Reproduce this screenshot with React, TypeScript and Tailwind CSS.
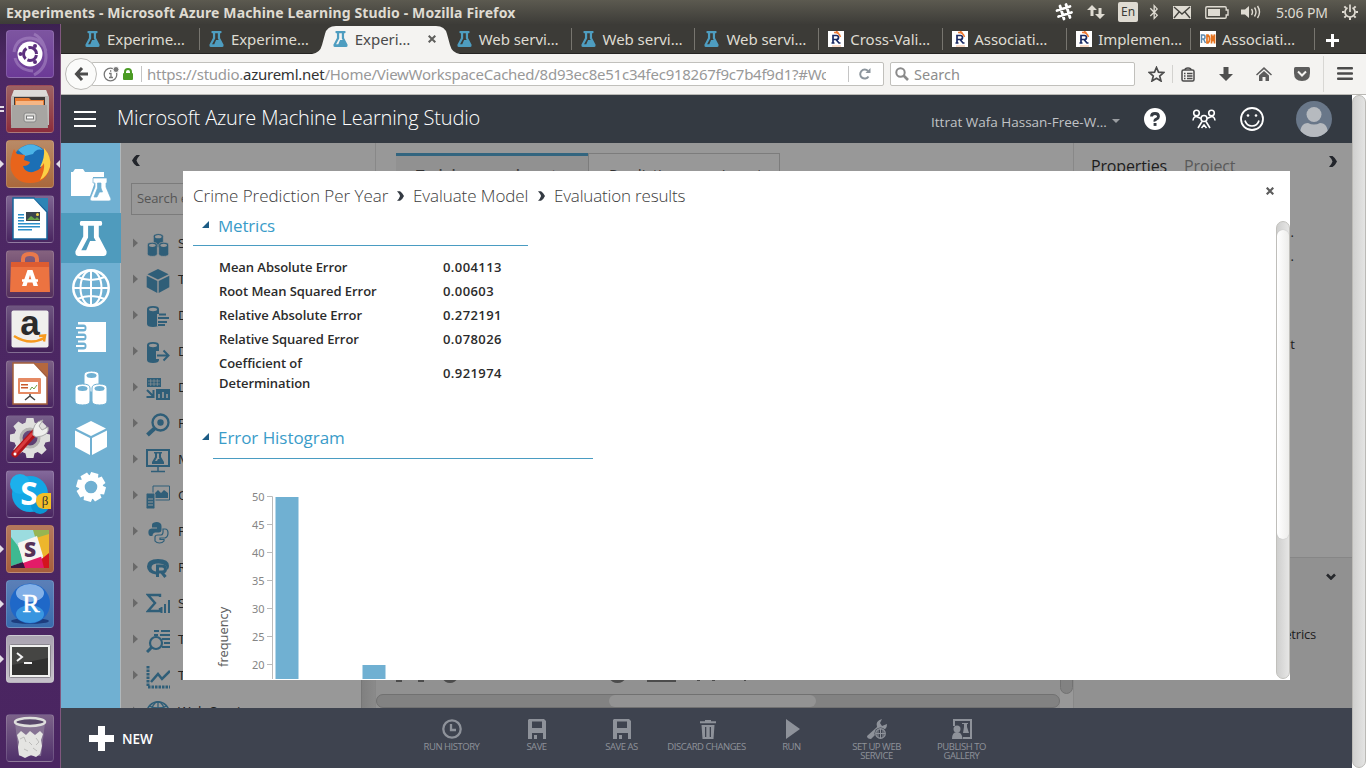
import React from "react";
import { FaBluetoothB } from "react-icons/fa";

type P = { className?: string };

const Flask = ({ className = "" }: P) => (
  <svg viewBox="0 0 32 36" className={className} fill="currentColor" fillRule="evenodd">
    <path d="M6 0h20q1.500 0 1.500 2.500T26 5h-2v11l8 15q.5 5-3 5H3q-3.500 0-3-5l8-15V5H6Q4.500 5 4.500 2.500T6 0zM13 5v12L6 30h5l4-9.500h6L19 17V5z" />
  </svg>
);

const Cylinders = ({ className = "", hole }: P & { hole: string }) => (
  <svg viewBox="0 0 34 36" className={className} fill="currentColor">
    {[[10, 1], [1, 14], [18, 14]].map(([x, y]) => (
      <g key={`${x}-${y}`}>
        <path d={`M${x} ${y + 4}q0-4 7.500-4t7.500 4v13q0 4-7.500 4t-7.500-4z`} stroke={hole} strokeWidth="1" />
        <ellipse cx={x + 7.5} cy={y + 4.5} rx="5" ry="2.500" fill={hole} />
      </g>
    ))}
  </svg>
);

const Cube = ({ className = "" }: P) => (
  <svg viewBox="0 0 32 34" className={className} fill="currentColor">
    <path d="M16 0l15 7.500L16 15 1 7.500zM0 9.500l15 7.500v17L0 26zM32 9.500L17 17v17l15-8z" />
  </svg>
);

const Globe = ({ className = "" }: P) => (
  <svg viewBox="0 0 38 38" className={className} fill="none" stroke="currentColor" strokeWidth="2">
    <circle cx="19" cy="19" r="17.700" strokeWidth="2.500" />
    <ellipse cx="19" cy="19" rx="10.500" ry="17.500" />
    <path d="M19 1v36M1 19h36M5.500 8q13.500 6 27 0M5.500 30q13.500-6 27 0" />
  </svg>
);

const Gear = ({ className = "" }: P) => (
  <svg viewBox="-16 -16 32 32" className={className} fill="currentColor">
    {[0, 45, 90, 135, 180, 225, 270, 315].map((a) => (
      <path key={a} d="M-5-9l1-6.500h8l1 6.500z" transform={`rotate(${a + 15})`} />
    ))}
    <circle r="9.700" fill="none" stroke="currentColor" strokeWidth="6" />
  </svg>
);

const Chevron = ({ className = "" }: P) => (
  <svg viewBox="0 0 8 11" className={className} fill="currentColor">
    <path d="M0 0h3.500q3 2 4.500 5.500Q6.500 9 3.500 11H0q2.500-2.500 3.500-5.500Q2.500 2.500 0 0z" />
  </svg>
);

/* ---------- launcher ---------- */

const launcher: { name: string; tile: string; left?: boolean; right?: boolean; art: React.ReactNode }[] = [
  {
    name: "dash", tile: "bg-linear-to-b from-[#7d55a0] to-[#6c3a97]",
    art: (
      <>
        <g fill="none" stroke="#b79bd0" strokeOpacity=".45" strokeWidth="3">
          <path d="M8 22Q10 8 24 8q12 1 16 13M40 24Q41 38 28 45M9 28q3 12 18 13M28 4q12 6 12 24" />
        </g>
        <circle cx="24" cy="24" r="12.500" fill="#fff" />
        <circle cx="24" cy="24" r="6.500" fill="none" stroke="#5b2f7d" strokeWidth="3" strokeDasharray="11.600 2" strokeDashoffset="-1" />
        <g fill="#5b2f7d"><circle cx="14.500" cy="24" r="2" /><circle cx="29" cy="16" r="2" /><circle cx="29" cy="32" r="2" /></g>
      </>
    ),
  },
  {
    name: "files", tile: "bg-linear-to-b from-[#9d6263] to-[#8c2c3c]", left: true,
    art: (
      <>
        <path d="M8 5h32l3 7v28H5V12z" fill="#bdbbb8" /><path d="M8 5h32l2 6H6z" fill="#dddbd8" />
        <path d="M8 12h31v10H8z" fill="#3f3a38" /><path d="M9 13h14l2 2h13v6H9z" fill="#e87c33" /><path d="M10 16h27v4H10z" fill="#f6b685" />
        <path d="M6 20h35l1 23H5z" fill="#a7a5a2" /><rect x="18" y="28" width="12" height="9" rx="2" fill="#d9d8d5" stroke="#888" /><rect x="20.500" y="31" width="7" height="3" fill="#fff" stroke="#777" />
      </>
    ),
  },
  {
    name: "firefox", tile: "bg-linear-to-b from-[#b98a66] to-[#a9683c]", left: true, right: true,
    art: (
      <>
        <circle cx="25" cy="23" r="18.500" fill="#1c6fb5" /><path d="M12 10Q25-1 37 10 30 8 27 14l-8 2z" fill="#4bb3e6" />
        <path d="M38 8q8 9 6 19Q41 43 24 43q-14 0-19-13Q3 20 8 9l3 5 8 1-1 5 6 2q-1 4-7 4 2 7 10 6 10-2 11-13 1-5 0-11z" fill="#e8641b" />
        <path d="M38 8q8 9 6 19-3 10-10 13 5-10 4-17-2 4-4 4 5-9 4-19z" fill="#fbd045" />
      </>
    ),
  },
  {
    name: "writer", tile: "bg-linear-to-b from-[#7f6592] to-[#492560]",
    art: (
      <>
        <path d="M7 3h21l13 14v27H7z" fill="#fff" stroke="#14659c" strokeWidth="1.500" /><path d="M28 3h14v14z" fill="#2d84b5" />
        <path d="M12 19h6v1.500h-6zm0 3h6v1.500h-6zm0 3h6v1.500h-6zm0 3h22v1.500H12zm0 3h22v1.500H12zm0 3h14v1.500H12z" fill="#2b8fc9" />
        <path d="M20 17h14v9H20z" fill="#3b444c" /><path d="M21 25l4-4 4 3 2-2 3 3z" fill="#69a747" /><circle cx="31.500" cy="19.500" r="1.500" fill="#f3d34a" />
      </>
    ),
  },
  {
    name: "software", tile: "bg-linear-to-b from-[#85627f] to-[#54305c]",
    art: (
      <>
        <path d="M17 15V9q0-5 7-5t7 5v6" fill="none" stroke="#e9794b" strokeWidth="4" />
        <path d="M5 12h38l1 30H4z" fill="#ec7341" /><path d="M5 12h38v5H5z" fill="#dc5c31" />
        <path d="M16 36l5.500-16h5L32 36h-4.500l-1-3.500h-5l-1 3.500zM24 25l-1.500 5h3z" fill="#fff" fillRule="evenodd" /><path d="M16 30.500h16" stroke="#fff" strokeWidth="2.500" />
      </>
    ),
  },
  {
    name: "amazon", tile: "bg-linear-to-b from-[#6e5580] to-[#432158]",
    art: (
      <>
        <rect x="5.500" y="5.500" width="37" height="37" rx="2" fill="#f0efed" />
        <text x="24" y="30" textAnchor="middle" fontSize="35" fontWeight="700" fontFamily="Liberation Sans, sans-serif" fill="#2b2b2b">a</text>
        <path d="M8 31q16 10 30 2M33 31l6-.5-1 6" fill="none" stroke="#f79a1e" strokeWidth="2.500" />
      </>
    ),
  },
  {
    name: "impress", tile: "bg-linear-to-b from-[#7b6085] to-[#492560]",
    art: (
      <>
        <path d="M7 3h21l13 14v27H7z" fill="#fff" stroke="#a5603b" strokeWidth="1.500" /><path d="M28 3h14v14z" fill="#b4683e" />
        <rect x="12" y="18" width="23" height="16" rx="1" fill="#e58a64" /><path d="M14 22h18v10H14z" fill="#fff" />
        <path d="M15 24h7v1.500h-7zm0 3h7v1.500h-7z" fill="#c95a2c" /><path d="M24 30l2-3 2 2 3-4" fill="none" stroke="#70a648" /><path d="M24 34v3m-5 3l5-4 5 4" fill="none" stroke="#444" strokeWidth="1.500" />
      </>
    ),
  },
  {
    name: "settings", tile: "bg-linear-to-b from-[#77608a] to-[#492560]",
    art: (
      <>
        <g transform="translate(24 23)" fill="#dfdfdd">
          {[0, 45, 90, 135, 180, 225, 270, 315].map((a) => <path key={a} d="M-5-13l1.500-7h7l1.500 7z" transform={`rotate(${a})`} />)}
          <circle r="13" fill="none" stroke="#dfdfdd" strokeWidth="6" /><circle r="9" fill="none" stroke="#b4b3b1" strokeWidth="3" />
        </g>
        <path d="M9 39L28 18" stroke="#b0141a" strokeWidth="7" strokeLinecap="round" /><path d="M9 38L26 19" stroke="#d93b3d" strokeWidth="3" strokeLinecap="round" />
        <path d="M27 20q-1-13 10-15l-4 6 3 4 6-3q2 9-12 10z" fill="#efefed" stroke="#aaa" /><circle cx="9" cy="39" r="1.500" fill="#fff" />
      </>
    ),
  },
  {
    name: "skype", tile: "bg-linear-to-b from-[#84699b] to-[#492560]",
    art: (
      <>
        <circle cx="24" cy="24" r="18" fill="#13a7e5" /><circle cx="14" cy="14" r="10" fill="#1cb0ec" /><circle cx="34" cy="35" r="9" fill="#0a96d3" />
        <text x="23" y="35" textAnchor="middle" fontSize="32" fontWeight="700" fontFamily="Open Sans, sans-serif" fill="#fff">S</text>
        <path d="M37 23h8v16h-7q-8-1-8-8t7-8z" fill="#f2bf26" /><text x="39" y="35" textAnchor="middle" fontSize="13" fontFamily="Liberation Serif, serif" fill="#333">β</text>
      </>
    ),
  },
  {
    name: "slack", tile: "bg-linear-to-b from-[#b4785d] to-[#a65e3c]", left: true,
    art: (
      <>
        <rect x="5" y="5" width="38" height="38" rx="2" fill="#f3f1ee" />
        <path d="M5 5h24l4 8-24 8-4-3z" fill="#9bdcdf" /><path d="M27 5h16v6l-13 4z" fill="#97b552" /><path d="M30 13l13-4v23l-5 3z" fill="#edb62c" />
        <path d="M5 12l7 9 6 16-13 4z" fill="#3eb991" /><path d="M38 32l5-4v15h-6l-3-8z" fill="#d3141d" /><path d="M16 37l19-6 3 12H18z" fill="#e31c68" /><path d="M5 41l12-4 2 6H5z" fill="#3a1842" />
        <path d="M12 18l19-7 6 20-20 7z" fill="#f6f4f1" />
        <text x="24" y="32" textAnchor="middle" fontSize="21" fontWeight="800" fontFamily="Open Sans, sans-serif" fill="#553157">S</text>
      </>
    ),
  },
  {
    name: "rstudio", tile: "bg-linear-to-b from-[#5b7fb7] to-[#386bad]", left: true,
    art: (
      <>
        <ellipse cx="24" cy="41" rx="19" ry="3" fill="#1d3d7e" /><circle cx="24" cy="23.500" r="20" fill="#1f68c8" /><ellipse cx="24" cy="34" rx="14" ry="9" fill="#45a9ea" fillOpacity=".7" />
        <ellipse cx="24" cy="13" rx="14" ry="9" fill="#a4c8f2" fillOpacity=".75" />
        <text x="25" y="32" textAnchor="middle" fontSize="26" fontFamily="Liberation Serif, serif" fill="#fff" stroke="#fff" strokeWidth=".6">R</text>
      </>
    ),
  },
  {
    name: "terminal", tile: "bg-linear-to-b from-[#aaa3b0] to-[#c5c1c9]", left: true,
    art: (
      <>
        <rect x="3.500" y="9.500" width="41" height="33" rx="1" fill="#f1f1ef" stroke="#8b878f" /><rect x="6" y="12" width="36" height="28" fill="#313130" /><path d="M6 12h36v11L6 30z" fill="#454543" />
        <path d="M11 18l5 4-5 4M18 28h8" fill="none" stroke="#f4f4f4" strokeWidth="2" />
      </>
    ),
  },
];

const Tile = ({ tile, art }: { tile: string; art: React.ReactNode }) => (
  <div className={`size-12 rounded-[4px] border border-white/15 ${tile}`}>
    <svg viewBox="1 1 46 46" className="size-full">{art}</svg>
  </div>
);

const Launcher = () => (
  <aside className="flex w-[61px] shrink-0 flex-col justify-between border-r border-[#80577f] bg-linear-to-b from-[#3c2151] via-[#4d2864] via-5% to-[#4a2561] pt-[6px] pb-[6px]">
    <div className="flex flex-col gap-[7px]">
      {launcher.map((l) => (
        <div key={l.name} className="flex h-12 items-center">
          <svg viewBox="0 0 6 12" className="h-3 w-[6px]" fill="#e3dde6">
            {l.left && (l.name === "files" ? <path d="M0 3h4v2H0zM0 7h4v2H0z" /> : <path d="M0 2l4 4-4 4z" />)}
          </svg>
          <Tile tile={l.tile} art={l.art} />
          <svg viewBox="0 0 6 12" className="h-3 w-[6px]" fill="#e3dde6">{l.right && <path d="M6 2L2 6l4 4z" />}</svg>
        </div>
      ))}
    </div>
    <div className="pl-[6px]">
      <Tile
        tile="bg-linear-to-b from-[#7c6389] to-[#50306a]"
        art={
          <>
            <path d="M9 9h30l-4 33H13z" fill="#8c7c98" fillOpacity=".8" />
            <path d="M11 21l4-4 5 4 4-4 5 4 5-4 3 3-2 6 1 6-2 8-4 3-5-2-6 3-6-3-1-8 1-5z" fill="#e4e4e2" />
            <path d="M14 25l4-2 2 5M30 24l3 4-3 3M18 35l4 2M27 34l4 3M23 28l3 3" fill="none" stroke="#bcbcba" />
            <ellipse cx="24" cy="8" rx="15" ry="4" fill="#57476a" stroke="#dededc" strokeWidth="2.500" />
          </>
        }
      />
    </div>
  </aside>
);

/* ---------- desktop bar ---------- */

const TopBar = () => (
  <header className="flex h-6 shrink-0 items-center bg-linear-to-b from-[#5c5a50] to-[#3d3c38] pl-[6px] text-[#dfdbd2]">
    <div className="w-[1048px] text-[14px] font-bold tracking-[0.130px] whitespace-nowrap">Experiments - Microsoft Azure Machine Learning Studio - Mozilla Firefox</div>
    <svg viewBox="0 0 20 20" className="h-5 w-5" stroke="#fff" strokeWidth="2.800" strokeLinecap="round"><path d="M6 4l4 13M12 2.500l4 13M3 8.500l13-4M4.500 14.500l13-4" /></svg>
    <svg viewBox="0 0 18 16" className="ml-[13px] h-4 w-[18px]" fill="currentColor"><path d="M5 1l5 5H6.500v6h-3V6H0zM13 15l-5-5h3.500V4h3v6H18z" /></svg>
    <div className="ml-[13px] flex h-5 w-5 items-center justify-center rounded-[2px] bg-[#dfdbd2] text-[12px] text-[#3c3b37]">En</div>
    <FaBluetoothB className="ml-[8px] h-4 w-4" />
    <svg viewBox="0 0 18 13" className="ml-[11px] h-[13px] w-[18px]"><rect width="18" height="13" fill="#dfdbd2" /><path d="M1 1l8 7 8-7M1 12l5-6m11 6l-5-6" fill="none" stroke="#45443f" strokeWidth="1.400" /></svg>
    <svg viewBox="0 0 24 13" className="ml-[14px] h-[13px] w-6"><path d="M2 .75h18q1.200 0 1.200 1.200V4H23v5h-1.800v2q0 1.200-1.200 1.200H2q-1.200 0-1.200-1.200V2Q.8.750 2 .750z" fill="none" stroke="#dfdbd2" strokeWidth="1.400" /><path d="M3 3h12v7H3z" fill="#dfdbd2" /></svg>
    <svg viewBox="0 0 20 16" className="ml-[12px] h-4 w-5" fill="currentColor"><path d="M0 5.500h4L8 2v12l-4-3.500H0z" /><g fill="none" stroke="currentColor" strokeWidth="1.400"><path d="M10.500 5q2 3 0 6M13.500 3.500q3 4.500 0 9M16.500 2q4 6 0 12" /></g></svg>
    <div className="ml-[15px] w-[55px] text-[14px] tracking-[-0.100px] whitespace-nowrap">5:06 PM</div>
    <svg viewBox="-8 -8 16 16" className="ml-[11px] h-4 w-4" fill="none" stroke="currentColor" strokeWidth="1.700"><path d="M-2.500-4.300A5 5 0 1 0 2.500-4.300M0-7.500v7.500" />{[45, 90, 135, 180, 225, 270, 315].map((a) => <path key={a} d="M0-5.500v-2.500" transform={`rotate(${a})`} strokeWidth="2" />)}</svg>
  </header>
);

/* ---------- browser ---------- */

const RIcon = () => (
  <svg viewBox="0 0 16 16" className="h-4 w-4"><path fill="#fff" d="M0 0h16v16H0z" /><path d="M3.500 12h3M5 12V4.500h3.500q2 0 2 2t-2 2H5M8 8.500l3 3.500h1.500" fill="none" stroke="#1b2a63" strokeWidth="1.700" /><path d="M6 1.500q5-.5 6.500 4.500M8 0l2.500 2" fill="none" stroke="#ee7a33" strokeWidth="1.500" /><path d="M4 15h9" stroke="#f3b48c" /></svg>
);
const RdmIcon = () => (
  <svg viewBox="0 0 16 16" className="h-4 w-4"><path fill="#fff" d="M0 0h16v16H0z" /><path d="M1.500 12V4h2q1.500 0 1.500 2T3.500 8H2m1.500 0L5.500 12" fill="none" stroke="#5f8aae" strokeWidth="1.500" /><path d="M7 4v8h1q1.500-1 1.500-4T8 4zM11.500 12.500v-9l1.500 5 1.500-5v9" fill="none" stroke="#e4731f" strokeWidth="1.700" /></svg>
);

const tabs: [string, "flask" | "r" | "rdm"][] = [
  ["Experime…", "flask"], ["Experime…", "flask"], ["Experi…", "flask"], ["Web servi…", "flask"], ["Web servi…", "flask"],
  ["Web servi…", "flask"], ["Cross-Vali…", "r"], ["Associati…", "r"], ["Implemen…", "r"], ["Associati…", "rdm"],
];

const TabStrip = () => (
  <div className="flex h-[30px] shrink-0 bg-[#3c3b37] pl-[15px] text-[15px] text-[#dfdbd2] shadow-[inset_0_-1px_0_#252422]">
    {tabs.map(([label, icon], i) => {
      const active = i === 2;
      return (
        <div key={i} className={`relative flex w-[123.900px] shrink-0 items-center ${active ? "text-[#4a4a4a]" : ""}`}>
          {active && (
            <svg viewBox="0 0 148 28" className="absolute top-[2px] left-[-12px] h-7 w-[148px]" fill="#f4f3f1">
              <path d="M0 28q8-1 10-9l3-11q2-8 11-8h100q9 0 11 8l3 11q2 8 10 9z" />
            </svg>
          )}
          <div className="relative flex flex-1 items-center pl-[9px]">
            {icon === "flask" && <Flask className="mr-[7px] h-4 w-[15px] text-[#4e9dc0]" />}
            {icon === "r" && <span className="mr-[6px]"><RIcon /></span>}
            {icon === "rdm" && <span className="mr-[6px]"><RdmIcon /></span>}
            <span className="tracking-[-0.050px] whitespace-nowrap">{label}</span>
            {active && <svg viewBox="0 0 8 8" className="ml-[18px] h-2 w-2" stroke="#5e5e5c" strokeWidth="2"><path d="M.7.7l6.600 6.600M7.300.700L.7 7.300" /></svg>}
          </div>
          {i !== 1 && !active && <i className="h-[22px] w-px bg-[#77756f]" />}
        </div>
      );
    })}
    <svg viewBox="0 0 13 13" className="mt-[10px] ml-[11px] h-[13px] w-[13px]" fill="#fff"><path d="M5 0h3v5h5v3H8v5H5V8H0V5h5z" /></svg>
  </div>
);

const Toolbar = () => (
  <div className="flex h-[41px] shrink-0 items-center border-b border-[#b9b8b4] bg-[#f4f3f1] pl-1">
    <div className="z-10 flex size-8 items-center justify-center rounded-full border border-[#bcbbb8] bg-[#fbfbfa]">
      <svg viewBox="0 0 14 14" className="h-[14px] w-[14px]" fill="none" stroke="#4c4c4c" strokeWidth="3"><path d="M8 1L2.500 7 8 13M3 7h11" /></svg>
    </div>
    <div className="-ml-[5px] flex h-6 w-[792px] items-center rounded-r-[2px] border border-[#c1c0bc] bg-white">
      <svg viewBox="0 0 17 16" className="ml-[10px] h-4 w-[17px]"><circle cx="7.500" cy="8.500" r="6.300" fill="none" stroke="#777" strokeWidth="1.300" /><path d="M6 7.500h2v4m-2 0h4M7 5h1.300" stroke="#777" strokeWidth="1.300" fill="none" /><circle cx="13" cy="3.500" r="3" fill="#777" stroke="#fff" /></svg>
      <svg viewBox="0 0 10 12" className="ml-[3px] h-3 w-[10px]"><path d="M2 6V4q0-3 3-3t3 3v2" fill="none" stroke="#4b9b24" strokeWidth="2" /><rect y="5" width="10" height="7" rx="1" fill="#4b9b24" /></svg>
      <i className="ml-[8px] h-4 w-px bg-[#c5c5c5]" />
      <div className="ml-[5px] w-[679px] overflow-hidden text-[15px] tracking-[-0.250px] whitespace-nowrap text-[#999]">
        https://studio.<span className="text-[#333]">azureml.net</span>/Home/ViewWorkspaceCached/8d93ec8e51c34fec918267f9c7b4f9d1?#Wo
      </div>
      <i className="ml-auto h-4 w-px bg-[#c5c5c5]" />
      <svg viewBox="0 0 12 12" className="mr-[12px] ml-[10px] h-3 w-3" fill="none" stroke="#8c959d" strokeWidth="2"><path d="M9.500 8.500A4.500 4.500 0 1 1 9 3" /><path d="M11.500 0v5h-5z" fill="#8c959d" stroke="none" /></svg>
    </div>
    <div className="ml-[6px] flex h-6 w-[245px] items-center rounded-[2px] border border-[#c1c0bc] bg-white pl-1 text-[14.500px] text-[#8d8d8d]">
      <svg viewBox="0 0 14 14" className="mr-[5px] h-[14px] w-[14px]" fill="none" stroke="#8a8a8a" strokeWidth="2"><circle cx="5.500" cy="5.500" r="4.200" /><path d="M8.500 8.500L13 13" strokeWidth="2.600" /></svg>
      <span className="pt-[2px]">Search</span>
    </div>
    <svg viewBox="0 0 17 16" className="ml-[13px] h-4 w-[17px]" fill="none" stroke="#4b4b4b" strokeWidth="1.700"><path d="M8.500 1.500l2 4.700 5.200.4-4 3.400 1.300 5-4.500-2.700L4 15l1.300-5-4-3.400 5.200-.4z" /></svg>
    <i className="ml-[7px] h-[18px] w-px bg-[#d3d2cf]" />
    <svg viewBox="0 0 14 15" className="ml-[8px] h-[15px] w-[14px]" fill="none" stroke="#4b4b4b" strokeWidth="1.500"><rect x="1" y="3" width="12" height="11" rx="1.500" /><path d="M4 3q0-2 3-2t3 2M3 6.500h1.500M6 6.500h5.500M3 9h1.500M6 9h5.500M3 11.500h1.500M6 11.500h5.500" /></svg>
    <svg viewBox="0 0 14 14" className="ml-[24px] h-[14px] w-[14px]" fill="#4f4f4f"><path d="M4.500 0h5v7H14l-7 7-7-7h4.500z" /></svg>
    <svg viewBox="0 0 16 15" className="ml-[23px] h-[15px] w-4" fill="#5c5c5c"><path d="M0 7.500L8 0l8 7.500-1 1-7-6.300L1 8.500z" /><path d="M3 8.500l5-4.500 5 4.500V14H9.500v-4h-3v4H3z" /></svg>
    <svg viewBox="0 0 16 14" className="ml-[22px] h-[14px] w-4"><path d="M1.500 0h13Q16 0 16 1.500V6q0 8-8 8T0 6V1.500Q0 0 1.500 0z" fill="#5c5c5c" /><path d="M4 4.500l4 4 4-4" fill="none" stroke="#f4f3f1" strokeWidth="2" /></svg>
    <i className="ml-[13px] h-9 w-px bg-[#d8d7d4]" />
    <svg viewBox="0 0 16 14" className="ml-[13px] h-[14px] w-4" fill="#4b4b4b"><rect y="0" width="16" height="2.600" rx="1" /><rect y="5.200" width="16" height="2.600" rx="1" /><rect y="10.400" width="16" height="2.600" rx="1" /></svg>
  </div>
);

/* ---------- studio ---------- */

const StudioHeader = () => (
  <div className="flex h-12 shrink-0 items-center bg-[#343a42] pl-[13px] text-white">
    <div className="flex flex-col gap-[5px]">{[0, 1, 2].map((i) => <i key={i} className="h-[2px] w-[22px] bg-white" />)}</div>
    <div className="ml-[21px] w-[814px] pb-[2px] text-[20px] font-light tracking-[-0.160px] whitespace-nowrap">Microsoft Azure Machine Learning Studio</div>
    <div className="w-[176px] pt-[6px] text-[13.500px] whitespace-nowrap text-[#c1c3c6]">Ittrat Wafa Hassan-Free-W...</div>
    <svg viewBox="0 0 8 4" className="mt-[3px] ml-[5px] h-1 w-2 shrink-0" fill="#9a9da1"><path d="M0 0h8L4 4z" /></svg>
    <svg viewBox="0 0 22 22" className="ml-[24px] h-[22px] w-[22px] shrink-0"><circle cx="11" cy="11" r="11" fill="#fff" /><path d="M7.500 8.500Q7.500 5.500 11 5.500t3.500 2.900Q14.500 10 12.500 11t-1.500 2.500" fill="none" stroke="#343a42" strokeWidth="2.800" /><rect x="9.600" y="15" width="2.900" height="2.900" fill="#343a42" /></svg>
    <svg viewBox="0 0 24 20" className="ml-[26px] h-5 w-6 shrink-0" fill="none" stroke="#fff" strokeWidth="1.600"><circle cx="4.500" cy="4" r="2.800" /><circle cx="19.500" cy="4" r="2.800" /><circle cx="12" cy="9.500" r="3" /><path d="M1 11.500Q1.500 7.500 4.500 7.500L9 9.500M23 11.500Q22.500 7.500 19.500 7.500L15 9.500M6 19l4-6.500M18 19l-4-6.500M9.500 19l2.500-3 2.500 3" /></svg>
    <svg viewBox="0 0 24 24" className="ml-[24px] h-6 w-6 shrink-0"><circle cx="12" cy="12" r="11" fill="none" stroke="#fff" strokeWidth="1.800" /><circle cx="8" cy="8.500" r="1.300" fill="#fff" /><circle cx="16" cy="8.500" r="1.300" fill="#fff" /><path d="M5 13.500q1.500 5.500 7 5.500t7-5.500" fill="none" stroke="#fff" strokeWidth="1.700" /></svg>
    <svg viewBox="0 0 36 36" className="ml-[32px] h-9 w-9 shrink-0"><clipPath id="av"><circle cx="18" cy="18" r="18" /></clipPath><g clipPath="url(#av)"><path fill="#697789" d="M0 0h36v36H0z" /><circle cx="18" cy="13.500" r="7.500" fill="#b6babf" /><path d="M4 34q0-12 8-12 6 3 12 0 8 0 8 12-6 5-14 5T4 34z" fill="#b6babf" /></g></svg>
  </div>
);

const Rail = () => (
  <nav className="flex w-[60px] shrink-0 flex-col items-center border-r border-[#b0b8bc] bg-[#70b0d2] pt-[26px] text-white">
    <svg viewBox="0 0 40 32" className="h-8 w-10" fill="currentColor"><path d="M0 3h2l2-3h8l2 3h19v5H22v5h2l-5 14H0z" /><path d="M22 9h14v5h-1v4l5 12q0 2-2 2H21q-2 0-2-2l5-12v-4h-2zM26.500 14v5L23 28h3l2.500-5h3L30 19v-5z" fillRule="evenodd" stroke="#70b0d2" strokeWidth=".7" /></svg>
    <div className="mt-[12px] flex h-[50px] w-[60px] items-center justify-center bg-[#4f9bbd]"><Flask className="h-[35px] w-8" /></div>
    <Globe className="mt-[6px] h-[38px] w-[38px]" />
    <svg viewBox="0 0 30 30" className="mt-[15px] h-[30px] w-[30px]" fill="currentColor">
      <path d="M2 0h28v30H2z" />
      <g fill="#70b0d2"><path d="M0 2.500h7.500q3 0 3 3.500t-3 3.500H0zM0 11.500h7.500q3 0 3 3.500t-3 3.500H0zM0 20.500h7.500q3 0 3 3.500t-3 3.500H0z" /></g>
      <g fill="none" stroke="#fff" strokeWidth="2"><path d="M0 6h8.500M0 15h8.500M0 24h8.500" /></g>
    </svg>
    <Cylinders className="mt-[18px] h-[36px] w-[34px]" hole="#70b0d2" />
    <Cube className="mt-[15px] h-[34px] w-8" />
    <Gear className="mt-[17px] h-[30px] w-[30px]" />
  </nav>
);

const Cyl = () => <><path d="M1 4q0-3 6-3t6 3v15q0 3-6 3t-6-3z" /><ellipse cx="7" cy="4.500" rx="4" ry="1.700" fill="#989898" /></>;

const paletteIcons: React.ReactNode[] = [
  <Cylinders className="size-6" hole="#989898" />,
  <Cube className="size-6" />,
  <><Cyl /><path d="M11 9h10v12H11z" fill="#989898" /><path d="M13 9.500h7M12 13h11M12 17h9M12 20h7" stroke="currentColor" strokeWidth="1.800" /></>,
  <><Cyl /><path d="M10 10h5v8h-5z" fill="#989898" /><path d="M11 14.500h11M17.500 9.500l5 5-5 5" fill="none" stroke="currentColor" strokeWidth="2" /></>,
  <><path d="M1 1h14v9H1z" /><path d="M2 4h12M2 7h12M4.700 2v7M8 2v7M11.300 2v7" stroke="#989898" strokeWidth=".6" /><path d="M1 13l6 6M7.500 13v7h-7" fill="none" stroke="currentColor" strokeWidth="2" /><path d="M10 12h14v11H10z" /><path d="M13 21v-4M17 21v-6M21 21v-4" stroke="#989898" strokeWidth="1.600" /></>,
  <><circle cx="14.500" cy="9.500" r="8" fill="none" stroke="currentColor" strokeWidth="2.300" /><circle cx="14.500" cy="9.500" r="3.200" /><path d="M8.500 15.500L1.500 22" stroke="currentColor" strokeWidth="4" /></>,
  <><path d="M1 1h22v16H1z" fill="none" stroke="currentColor" strokeWidth="2" /><path fillRule="evenodd" d="M8 3h8v1.500h-1V8l3 5v2H6v-2l3-5V4.500H8zM11 4.500v4L9 12h2l1-2h1.500l-.5-1.500v-4z" /><path d="M12 17v5M5 22.500h14" stroke="currentColor" strokeWidth="1.500" /></>,
  <><path d="M7 1h16.500v14H7z" fill="none" stroke="currentColor" /><path d="M9 13V8l3-3 3 3 3-3 4 3v5z" /><rect y="8" width="9" height="16" rx="1.500" stroke="#989898" /><path d="M2 14h5M2 17h5M2 20h5" stroke="#989898" /></>,
  <><path d="M7 2q4-2 7 0 1.500 1 1.500 3v4q0 2-2.500 2.500H9Q6.500 12 6.500 15H4q-2-1-1.500-5 .5-2.500 3.500-2.500h5v-1H6V4q0-1.500 1-2z" /><path d="M17 8h2q3 0 3 4t-3 5h-5v1.500h4V20q-1.500 2-4.500 2T9 20v-4q0-2 3-2h3q2.500 0 2-6z" fill="none" stroke="currentColor" strokeWidth="1.200" /></>,
  <><path d="M1 9.500Q1 2 12 2t11 7q0 2-1.500 4-.5-6.500-9-6.500-7 0-7 4 0 3 4.500 4v3Q1 16 1 9.500z" /><path d="M11.500 20V9h4.500q3.500 0 3.500 3t-3.500 3h-4M15.500 15l4 5" fill="none" stroke="currentColor" strokeWidth="3" /></>,
  <><path d="M14 4V2H2l7 8-7 8h12v-3" fill="none" stroke="currentColor" strokeWidth="2.400" /><path d="M15.500 20v-6M19 20V11M23 20V7" stroke="currentColor" strokeWidth="2" /></>,
  <><path d="M8 2h5m2 0h9M8 6h4m2 0h10M16 10h8M18 14h6M16 18h8" stroke="currentColor" strokeWidth="2" /><circle cx="10" cy="14" r="6" fill="none" stroke="currentColor" strokeWidth="2.200" /><path d="M6 18l-5 5" stroke="currentColor" strokeWidth="3" /></>,
  <><path d="M2 1v21M2 22h22" fill="none" stroke="currentColor" strokeWidth="3" strokeDasharray="2.500 1" /><path d="M5 17l7-8 4 5 8-8" fill="none" stroke="currentColor" strokeWidth="2.500" /></>,
  <Globe className="size-6" />,
];
const paletteLabels = ["Saved Datasets", "Trained Models", "Data Format Conversions", "Data Input and Output", "Data Transformation", "Feature Selection", "Machine Learning", "OpenCV Library Modules", "Python Language Modules", "R Language Modules", "Statistical Functions", "Text Analytics", "Time Series", "Web Service"];

const Palette = () => (
  <section className="flex w-[255px] shrink-0 border-r border-[#888]">
    <div className="flex flex-1 flex-col overflow-hidden pt-[12px] pl-[10px]">
      <Chevron className="ml-px h-[11px] w-2 shrink-0 rotate-180 text-[#22252b]" />
      <div className="mt-[17px] flex h-8 w-[220px] shrink-0 items-center border border-[#7b7b7b] pl-[5px] text-[13px] tracking-[-0.100px] text-[#555]">Search experiment items</div>
      <div className="mt-[10px] text-[#2f5e78]">
        {paletteLabels.map((l, i) => (
          <div key={l} className="flex h-9 items-center whitespace-nowrap">
            <svg viewBox="0 0 5 9" className="mr-[8px] ml-[2px] h-[10px] w-[5px] shrink-0" fill="#696969"><path d="M0 0l5 4.500L0 9z" /></svg>
            <svg viewBox="0 0 24 24" className="mt-[3px] size-6 shrink-0" fill="currentColor">{paletteIcons[i]}</svg>
            <span className="ml-[8px] text-[13.500px] text-[#222]">{l}</span>
          </div>
        ))}
      </div>
    </div>
    <div className="mt-[82px] w-[14px] border-l border-[#777] bg-linear-to-r from-[#808080] to-[#8a8a8a]" />
  </section>
);

const Canvas = () => (
  <section className="flex min-w-0 flex-1 flex-col bg-[#989898]">
    <div className="flex h-[527px] flex-col pt-[10px]">
      <div className="flex h-11 pl-[20px] text-[15px] whitespace-nowrap text-[#333]">
        <div className="w-[192px] border-t-[3px] border-[#33657f] bg-[#919191] pt-[7px] pl-[20px] font-semibold tracking-[-0.350px]">Training experiment</div>
        <div className="w-[192px] border border-[#7c7c7c] pt-[9px] pl-[20px]">Predictive experiment</div>
      </div>
    </div>
    <div className="flex min-h-0 flex-1">
      <div className="flex flex-1 flex-col bg-[#919191]">
        <svg viewBox="0 0 684 24" className="h-6 w-[684px] shrink-0" fill="#4c4c4c"><path d="M20 8h6v4h-6zM42 8h6v4h-6zM66 8h16q-3 5-8 5t-8-5zM233 8h17q-3 5-8.500 5T233 8zM271 8h29v4h-29zM321 8h3v3h-3zM336 8h3v3h-3zM368 8h2v3h-2z" /></svg>
        <div className="h-[14px] rounded-full border border-[#717171] bg-[#828282] pl-[232px]"><div className="h-full w-[207px] rounded-full bg-[#939393]" /></div>
      </div>
      <div className="h-6 w-[14px] rounded-b-full border border-[#727272] bg-[#828282]" />
    </div>
  </section>
);

const Properties = () => (
  <section className="flex w-[279px] shrink-0 flex-col border-l border-[#888] bg-[#989898] text-[#1d1d1d]">
    <div className="flex h-[90px] pt-[12px] pl-[17px] text-[16px]">
      <span className="-mt-px tracking-[-0.150px]">Properties</span>
      <span className="-mt-px ml-[17px] tracking-[-0.100px] text-[#5a5a5a]">Project</span>
      <Chevron className="mt-px mr-[15px] ml-auto h-[11px] w-2 text-[#22252b]" />
    </div>
    <div className="flex h-[324px] w-[220px] flex-col items-end text-[13px] leading-6">
      <span className="-mt-[13px]">...</span><span>...</span><span className="mt-[64px] -mr-px">t</span>
    </div>
    <div className="flex flex-1 flex-col border-t border-[#868686] bg-[#919191]">
      <svg viewBox="0 0 10 7" className="mt-[15px] mr-[16px] h-[7px] w-[10px] self-end" fill="none" stroke="#26282c" strokeWidth="2.600"><path d="M1 1.500l4 4 4-4" /></svg>
      <div className="mt-[45px] w-[242px] text-right text-[13px] tracking-[-0.200px]">View metrics</div>
    </div>
  </section>
);

/* ---------- results dialog ---------- */

const metrics = [["Mean Absolute Error", "0.004113"], ["Root Mean Squared Error", "0.00603"], ["Relative Absolute Error", "0.272191"], ["Relative Squared Error", "0.078026"], ["Coefficient of Determination", "0.921974"]];

const Corner = () => <svg viewBox="0 0 7 7" className="h-[7px] w-[7px]" fill="#1c5c85"><path d="M7 0v7H0z" /></svg>;

const Histogram = () => (
  <svg viewBox="0 0 400 200" className="h-[200px] w-[400px]" fontFamily="Noto Sans, sans-serif">
    <path d="M79.500 6.500V200" stroke="#bbb" fill="none" />
    {[50, 45, 40, 35, 30, 25, 20].map((v, i) => (
      <g key={v}>
        <path d={`M74 ${6.5 + i * 28}h5.500`} stroke="#bbb" />
        <text x="71.500" y={10.5 + i * 28} textAnchor="end" fontSize="11" fill="#858585">{v}</text>
      </g>
    ))}
    <rect x="82.500" y="7" width="23" height="193" fill="#70b0d2" />
    <rect x="169.500" y="175" width="23" height="25" fill="#70b0d2" />
    <text transform="translate(35 177) rotate(-90)" fontSize="12.800" fill="#606060">frequency</text>
  </svg>
);

const Dialog = () => (
  <div className="absolute top-[76px] left-[122px] flex h-[509px] w-[1107px] flex-col bg-white">
    <div className="flex h-[50px] shrink-0 items-center pl-[10px] text-[17px] font-light whitespace-nowrap text-[#3c3c3c]">
      <span className="w-[195px] tracking-[-0.020px]">Crime Prediction Per Year</span>
      <Chevron className="mx-[9px] h-[10px] w-[7px] text-[#343a42]" />
      <span className="w-[116px] tracking-[-0.080px]">Evaluate Model</span>
      <Chevron className="mx-[9px] h-[10px] w-[7px] text-[#343a42]" />
      <span className="tracking-[-0.180px]">Evaluation results</span>
      <svg viewBox="0 0 8 8" className="mr-[16px] mb-[10px] ml-auto h-2 w-2" stroke="#5c5c5c" strokeWidth="2.200"><path d="M.7.700l6.600 6.600M7.300.700L.7 7.300" /></svg>
    </div>
    <div className="flex h-[458px] overflow-hidden">
      <div className="flex-1 overflow-hidden pl-[10px]">
        <div className="flex h-[25px] w-[335px] items-start border-b border-[#4a9cc2] pl-[9px]">
          <Corner />
          <span className="-mt-[7px] ml-[9px] text-[17px] leading-6 tracking-[-0.200px] text-[#3a9cc9]">Metrics</span>
        </div>
        <div className="flex flex-col pt-[9px] pl-[26px] text-[13px] leading-5 font-semibold text-[#2b2b2b]">
          {metrics.map(([k, v]) => (
            <div key={k} className="flex items-center py-[2px]"><span className={k.startsWith("Coef") ? "w-[110px] tracking-[-0.060px]" : "w-[180px] tracking-[-0.060px] whitespace-nowrap"}>{k}</span><span className={k.startsWith("Coef") ? "ml-[114px] tracking-[0.400px]" : "ml-[44px] tracking-[0.400px]"}>{v}</span></div>
          ))}
        </div>
        <div className="mt-[30px] ml-[20px] flex h-[34px] w-[380px] border-b border-[#4a9cc2]">
          <span className="mt-[8px] -ml-[11px]"><Corner /></span>
          <span className="ml-[9px] text-[17px] leading-[26px] tracking-[-0.050px] text-[#3a9cc9]">Error Histogram</span>
        </div>
        <div className="pt-[31px]"><Histogram /></div>
      </div>
      <div className="w-[14px] rounded-full border border-[#c1c0bc] bg-linear-to-r from-[#cfcfce] to-[#e6e6e5] pt-[8px]">
        <div className="h-[309px] rounded-full bg-linear-to-r from-white to-[#ededeb] shadow-[0_0_1px_#aaa]" />
      </div>
    </div>
  </div>
);

/* ---------- command bar ---------- */

const Save = () => <path fillRule="evenodd" d="M2 0h15l2 2v18h-3v-6H5v6H1V1zM5 2.500V9h10V2.500zM7 16h3v4H7z" />;
const commands: [string, React.ReactNode][] = [
  ["RUN HISTORY", <><circle cx="10" cy="10" r="8.700" fill="none" stroke="currentColor" strokeWidth="2.300" /><path d="M9 5v6h5" fill="none" stroke="currentColor" strokeWidth="2.300" /></>],
  ["SAVE", <Save />],
  ["SAVE AS", <Save />],
  ["DISCARD CHANGES", <path fillRule="evenodd" d="M8 1h6v1.300h5v2H3v-2h5zM4.500 6h13l-1 14h-11zM8 8v10h1.300V8zm4.700 0v10H14V8z" />],
  ["RUN", <path d="M4 0l14 10L4 20z" />],
  ["SET UP WEB SERVICE", <><path d="M0 17L10 8q-2-6 5-8l-2 4 2 3 5-2q0 7-7 6l-9 9q-4 0-4-3z" /><circle cx="13.500" cy="14.500" r="6" fill="#3e434f" /><circle cx="13.500" cy="14.500" r="4.700" fill="none" stroke="currentColor" strokeWidth="1.400" /><path d="M13.500 10v9M9 14.500h9M11 11v7M16 11v7" stroke="currentColor" /></>],
  ["PUBLISH TO GALLERY", <><path d="M2 7V1h17v18h-8" fill="none" stroke="currentColor" strokeWidth="2" /><circle cx="5" cy="10" r="3.500" /><path d="M0 20q0-7 5-7t5.500 7zM10 4h6v1h-1v3l2 6h-6l1-6V5h-2z" /></>],
];

const CommandBar = () => (
  <footer className="flex h-[60px] shrink-0 bg-[#3e434f]">
    <div className="flex w-[348px] items-center pl-[28px]">
      <svg viewBox="0 0 25 25" className="h-[25px] w-[25px]" fill="#fff"><path d="M9 0h7v9h9v7h-9v9H9v-9H0V9h9z" /></svg>
      <span className="ml-[8px] pt-[3px] text-[13.500px] font-semibold tracking-[-0.100px] text-white">NEW</span>
    </div>
    {commands.map(([l, icon]) => (
      <div key={l} className="flex w-[85px] flex-col items-center pt-[11px] text-[#8e929a]">
        <svg viewBox="0 0 20 20" className="h-5 w-5" fill="currentColor">{icon}</svg>
        <span className={`mt-[3px] text-center text-[9.500px] leading-[9px] tracking-[-0.480px] ${l.length > 15 ? "w-[62px]" : "whitespace-nowrap"}`}>{l}</span>
      </div>
    ))}
  </footer>
);

export default function App() {
  return (
    <div className="flex h-[768px] w-[1366px] flex-col overflow-hidden font-['Noto_Sans',sans-serif]">
      <TopBar />
      <div className="flex min-h-0 flex-1">
        <Launcher />
        <main className="flex min-w-0 flex-1 flex-col">
          <TabStrip />
          <Toolbar />
          <div className="flex min-h-0 flex-1 font-['Open_Sans',sans-serif]">
            <div className="relative flex w-[1291px] flex-col overflow-hidden bg-[#989898]">
              <StudioHeader />
              <div className="flex min-h-0 flex-1 overflow-hidden"><Rail /><Palette /><Canvas /><Properties /></div>
              <CommandBar />
              <Dialog />
            </div>
            <div className="w-[14px] rounded-full border border-[#bbbab6] bg-linear-to-r from-[#d0d0cf] to-[#e4e4e3]" />
          </div>
        </main>
      </div>
    </div>
  );
}
